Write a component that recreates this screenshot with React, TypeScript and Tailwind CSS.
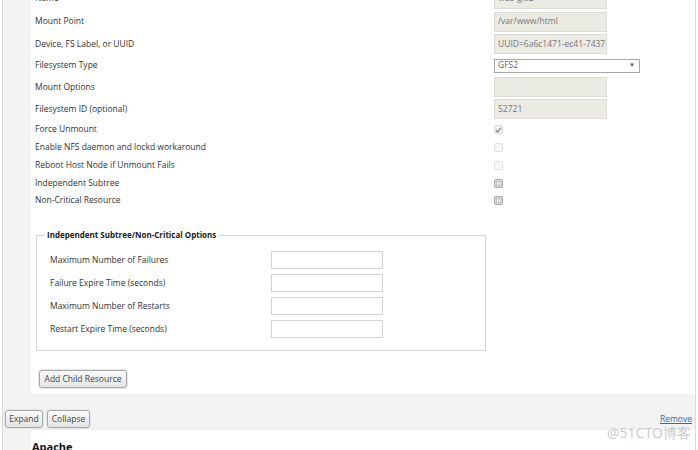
import React from 'react'

const font = { fontFamily: '"Open Sans", "Noto Sans", sans-serif' }

type Row = { label: string; h: string; kind: 'input' | 'select' | 'check'; value?: string; check?: 'on' | 'off' | 'open' }

const rows: Row[] = [
  { label: 'Name', h: 'h-[23px]', kind: 'input', value: 'web-gfs2' },
  { label: 'Mount Point', h: 'h-[23px]', kind: 'input', value: '/var/www/html' },
  { label: 'Device, FS Label, or UUID', h: 'h-[22px]', kind: 'input', value: 'UUID=6a6c1471-ec41-7437-a8f2-d3b3b0a9e1c2' },
  { label: 'Filesystem Type', h: 'h-[21px]', kind: 'select', value: 'GFS2' },
  { label: 'Mount Options', h: 'h-[22px]', kind: 'input', value: '' },
  { label: 'Filesystem ID (optional)', h: 'h-[22px]', kind: 'input', value: '52721' },
  { label: 'Force Unmount', h: 'h-[19px]', kind: 'check', check: 'on' },
  { label: 'Enable NFS daemon and lockd workaround', h: 'h-[17px]', kind: 'check', check: 'off' },
  { label: 'Reboot Host Node if Unmount Fails', h: 'h-[18px]', kind: 'check', check: 'off' },
  { label: 'Independent Subtree', h: 'h-[18px]', kind: 'check', check: 'open' },
  { label: 'Non-Critical Resource', h: 'h-[17px]', kind: 'check', check: 'open' },
]

const options = [
  'Maximum Number of Failures',
  'Failure Expire Time (seconds)',
  'Maximum Number of Restarts',
  'Restart Expire Time (seconds)',
]

function Check({ state }: { state?: 'on' | 'off' | 'open' }) {
  if (state === 'on') {
    return (
      <span className="flex h-[9px] w-[9px] items-center justify-center rounded-[2px] border border-[#dcdcdc] bg-[#f4f4f4]">
        <svg width="8" height="8" viewBox="0 0 8 8">
          <path d="M1 4.2 L3 6.3 L7 1.3" fill="none" stroke="#8a8a8a" strokeWidth="1.5" />
        </svg>
      </span>
    )
  }
  if (state === 'off') {
    return <span className="block h-[9px] w-[9px] rounded-[2px] border border-[#e2e2e2] bg-[#f7f7f7]" />
  }
  return (
    <span className="flex h-[9px] w-[9px] items-center justify-center rounded-[2px] border border-[#a8a8a8] bg-[#d9d9d9]">
      <span className="block h-[5px] w-[5px] border border-[#c4c4c4] bg-[#e8e8e8]" />
    </span>
  )
}

function Field({ row }: { row: Row }) {
  if (row.kind === 'check') {
    return <Check state={row.check} />
  }
  if (row.kind === 'select') {
    return (
      <div className="flex h-[14px] w-[146px] items-center justify-between border border-[#a9a9a9] bg-white pl-[3px] pr-[4px] text-[8.5px] text-[#666]">
        <span>{row.value}</span>
        <span className="text-[6px] text-[#555]">▼</span>
      </div>
    )
  }
  return (
    <div className="flex h-[20px] w-[113px] items-center overflow-hidden whitespace-nowrap border border-[#dcdcd4] bg-[#ebebe4] pl-[3px] text-[8.5px] text-[#777]">
      {row.value}
    </div>
  )
}

function Button({ children, w }: { children: React.ReactNode; w: string }) {
  return (
    <button
      className={`flex h-[18px] ${w} items-center justify-center rounded-[3px] border border-[#a8a8a8] bg-gradient-to-b from-[#fafafa] to-[#e4e4e4] text-[8.5px] text-[#444] shadow-[0_0_0_1px_#e6e6e6]`}
    >
      {children}
    </button>
  )
}

export default function App() {
  return (
    <div className="h-[450px] w-[698px] overflow-hidden bg-white" style={font}>
      <div className="ml-[2px] flex h-[450px] w-[694px] flex-col border-x border-[#d9d9d9] bg-[#f3f3f3]">
        {/* resource panel */}
        <div className="ml-[28px] shrink-0 bg-white pb-[6px] pl-[4px]">
          <div className="-mt-[13px] flex flex-col">
            {rows.map((row) => (
              <div key={row.label} className={`flex ${row.h} items-center`}>
                <span className="w-[459px] text-[8.5px] text-[#333]">{row.label}</span>
                <Field row={row} />
              </div>
            ))}
          </div>

          <fieldset className="ml-[1px] mt-[20px] w-[450px] border border-[#d6d6d6] pb-[12px] pl-[13px] pt-[10px]">
            <legend className="ml-[-5px] px-[2px] text-[8px] font-bold leading-[12px] text-[#222]">
              Independent Subtree/Non-Critical Options
            </legend>
            <div className="flex flex-col gap-[5px]">
              {options.map((o) => (
                <div key={o} className="flex h-[18px] items-center">
                  <span className="w-[221px] text-[8.5px] text-[#333]">{o}</span>
                  <div className="h-[18px] w-[112px] border border-[#d4d4d4] bg-white" />
                </div>
              ))}
            </div>
          </fieldset>

          <div className="mt-[19px] pl-[4px]">
            <Button w="w-[88px]">Add Child Resource</Button>
          </div>
        </div>

        {/* toolbar */}
        <div className="mr-[3px] flex h-[36px] shrink-0 items-end justify-between pb-[2px] pl-[2px]">
          <div className="flex gap-[4px]">
            <Button w="w-[38px]">Expand</Button>
            <Button w="w-[43px]">Collapse</Button>
          </div>
          <a className="mb-[2px] text-[8.5px] text-[#2a6eb5] underline" href="#">
            Remove
          </a>
        </div>

        <div className="relative ml-[28px] flex-1 bg-white pl-[1px] pt-[9px]">
          <span className="absolute right-[4px] -top-[8px] text-[14px] text-[#c9c9c9]">@51CTO博客</span>
          <div className="text-[11px] font-bold text-[#111]">Apache</div>
        </div>
      </div>
    </div>
  )
}
